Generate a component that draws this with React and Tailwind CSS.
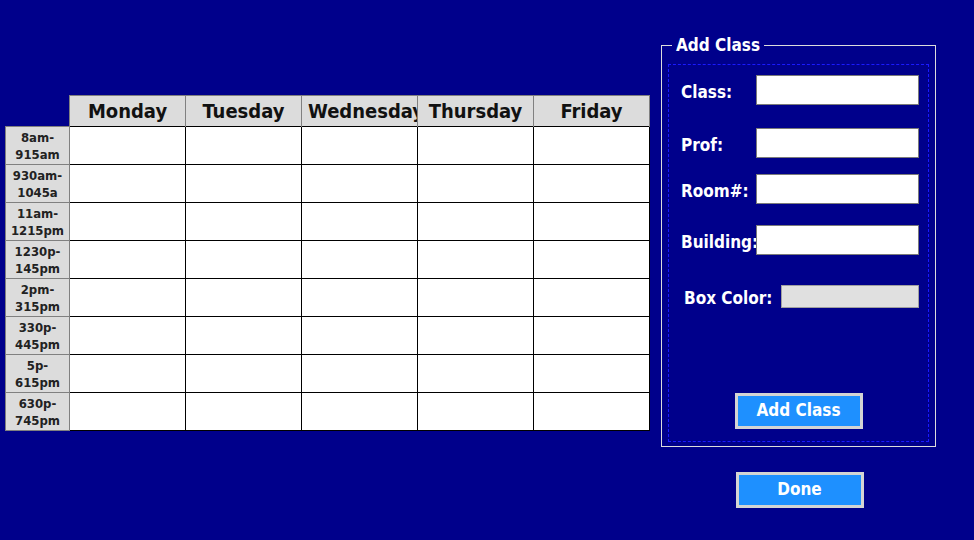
import React from 'react';

const days = ['Monday', 'Tuesday', 'Wednesday', 'Thursday', 'Friday'];
const times = [
  ['8am-', '915am'],
  ['930am-', '1045a'],
  ['11am-', '1215pm'],
  ['1230p-', '145pm'],
  ['2pm-', '315pm'],
  ['330p-', '445pm'],
  ['5p-', '615pm'],
  ['630p-', '745pm'],
];

const font = { fontFamily: '"DejaVu Sans Condensed", "DejaVu Sans", sans-serif' };

function Field({ label, mt }) {
  return (
    <div className={`flex items-center ${mt}`}>
      <span className="w-[75px] pt-[4px] leading-[20px] text-[17px] font-bold text-white whitespace-nowrap">{label}</span>
      <div className="w-[163px] h-[30px] bg-white border border-[#7a7a7a]" />
    </div>
  );
}

export default function App() {
  return (
    <div className="w-[974px] h-[540px] bg-[#00008b] flex overflow-hidden" style={font}>
      {/* Schedule grid */}
      <div className="pt-[95px] pl-[5px]">
        <table className="border-collapse table-fixed">
          <thead>
            <tr>
              <th className="w-[64px] h-[31px] p-0 border-0" />
              {days.map((d) => (
                <th
                  key={d}
                  className="w-[116px] h-[31px] p-0 px-[6px] leading-[26px] bg-[#dcdcdc] border border-[#808080] border-b-0 text-[20px] font-bold text-[#111] text-center whitespace-nowrap overflow-hidden max-w-[116px]"
                >
                  {d}
                </th>
              ))}
            </tr>
          </thead>
          <tbody>
            {times.map((t, i) => (
              <tr key={i}>
                <td className="w-[64px] h-[38px] p-0 bg-[#dcdcdc] border border-[#808080] text-center text-[13px] font-bold leading-[17px] text-[#222]">
                  {t[0]}
                  <br />
                  {t[1]}
                </td>
                {days.map((d) => (
                  <td key={d} className="h-[38px] p-0 bg-white border border-black" />
                ))}
              </tr>
            ))}
          </tbody>
        </table>
      </div>

      {/* Add class panel */}
      <div className="ml-[11px] pt-[35px] flex flex-col items-center">
        <fieldset className="w-[275px] h-[412px] border border-[#dcdcdc] px-[6px] pt-0">
          <legend className="ml-[4px] px-[4px] text-[17px] font-bold text-white leading-[20px]">Add Class</legend>
          <div className="mt-[9px] h-[378px] border border-dashed border-[#1a1aff] flex flex-col pl-[12px]">
            <Field label="Class:" mt="mt-[10px]" />
            <Field label="Prof:" mt="mt-[23px]" />
            <Field label="Room#:" mt="mt-[16px]" />
            <Field label="Building:" mt="mt-[21px]" />
            <div className="flex items-center mt-[29px] pl-[3px]">
              <span className="w-[97px] pt-[4px] leading-[20px] text-[17px] font-bold text-white whitespace-nowrap">Box Color:</span>
              <div className="w-[138px] h-[23px] bg-[#e0e0e0] border border-[#a0a0a0]" />
            </div>
            <div className="mt-[85px] flex justify-center pr-[12px]">
              <button className="w-[128px] h-[36px] bg-[#1e90ff] border-[3px] border-[#d4d4d4] text-white text-[17px] font-bold">
                Add Class
              </button>
            </div>
          </div>
        </fieldset>
        <button className="mt-[25px] ml-[2px] w-[128px] h-[36px] bg-[#1e90ff] border-[3px] border-[#d4d4d4] text-white text-[17px] font-bold">
          Done
        </button>
      </div>
    </div>
  );
}
